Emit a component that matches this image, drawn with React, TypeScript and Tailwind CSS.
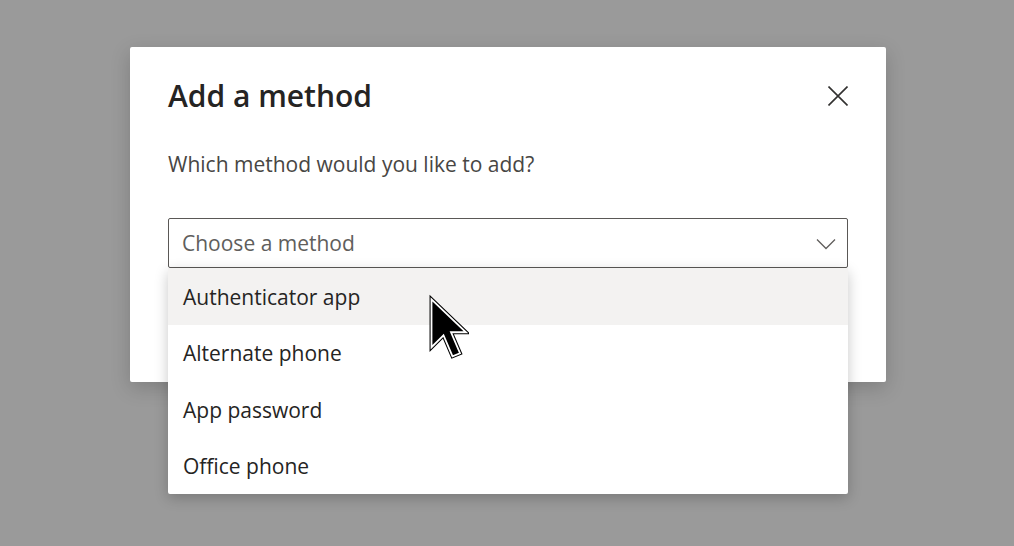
import React from "react";

const font = { fontFamily: '"Open Sans", "Noto Sans", sans-serif' };

function Cursor() {
  const d = "M1,1 L1,17 L5,13 L8,20 L10.5,19 L7.5,12 L12.5,12 Z";
  return (
    <svg width="42" height="66" viewBox="-0.5 -0.5 14 21.5" className="absolute left-[427px] top-[294px]">
      <path d={d} fill="none" stroke="#000" strokeWidth="1.3" strokeLinejoin="miter" />
      <path d={d} fill="#000" stroke="#fff" strokeWidth="0.6" strokeLinejoin="miter" />
    </svg>
  );
}

export default function App() {
  const items = ["Authenticator app", "Alternate phone", "App password", "Office phone"];
  return (
    <div className="relative h-[546px] w-[1014px] overflow-hidden bg-[#9a9a9a]" style={font}>
      <div className="pl-[130px] pt-[47px]">
        <div className="h-[335px] w-[756px] bg-white rounded-[2px] shadow-[0_6px_20px_rgba(0,0,0,0.18)] px-[38px] pt-[29px] flex flex-col">
          <div className="flex items-center justify-between">
            <h1 className="text-[30px] leading-[40px] font-semibold text-[#252423]">Add a method</h1>
            <svg width="20" height="20" viewBox="0 0 20 20">
              <path d="M0.5 0.5 L19.5 19.5 M19.5 0.5 L0.5 19.5" stroke="#323130" strokeWidth="1.6" />
            </svg>
          </div>
          <p className="mt-[34px] text-[21px] leading-[28px] text-[#484644]">Which method would you like to add?</p>
          <div className="mt-[40px] h-[50px] border border-[#5a5856] rounded-[2px] flex items-center justify-between pl-[13px] pr-[11px] pt-[1px]">
            <span className="text-[21px] text-[#605e5c]">Choose a method</span>
            <svg width="20" height="12" viewBox="0 0 20 12">
              <path d="M1 1.5 L10 10.5 L19 1.5" fill="none" stroke="#605e5c" strokeWidth="1.3" />
            </svg>
          </div>
        </div>
      </div>
      <div className="absolute left-[168px] top-[268px] w-[680px] bg-white rounded-[2px] shadow-[0_4px_14px_rgba(0,0,0,0.22)] flex flex-col">
        {items.map((t, i) => (
          <div
            key={t}
            className={`h-[56.5px] flex items-center pl-[15px] pt-[2px] text-[21px] text-[#252423] ${i === 0 ? "bg-[#f3f2f1]" : ""}`}
          >
            {t}
          </div>
        ))}
      </div>
      <Cursor />
    </div>
  );
}
